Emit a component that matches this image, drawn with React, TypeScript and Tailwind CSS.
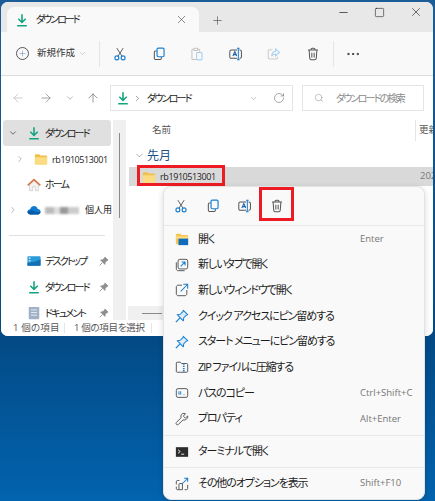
import { ArrowLeft, ArrowRight, ArrowUp, ChevronDown, ChevronRight, Minus, MoreHorizontal, Plus, RotateCw, Search, Square, X } from "lucide-react";
import type { ReactNode } from "react";

const font = "font-['Open_Sans','Noto_Sans_CJK_JP',sans-serif] [font-feature-settings:'palt']";

function DownloadIcon({ size = 16 }: { size?: number }) {
  return (
    <svg width={size} height={size} viewBox="0 0 16 16" fill="none">
      <path d="M8 1.500v9M3.800 6.600 8 10.800l4.200-4.200" stroke="#11a37f" strokeWidth="1.800" />
      <path d="M2.500 14.500h11" stroke="#11a37f" strokeWidth="1.800" />
    </svg>
  );
}

function FolderIcon({ size = 16 }: { size?: number }) {
  return (
    <svg width={size} height={size} viewBox="0 0 16 16" fill="none">
      <path d="M1 3.500c0-.6.4-1 1-1h4l1.500 1.500H14c.6 0 1 .4 1 1v8c0 .6-.4 1-1 1H2c-.6 0-1-.4-1-1z" fill="#f0c04c" />
      <path d="M1 6h14v7.500c0 .6-.4 1-1 1H2c-.6 0-1-.4-1-1z" fill="#fbdc82" />
    </svg>
  );
}

function CutIcon({ size = 15 }: { size?: number }) {
  return (
    <svg width={size} height={size} viewBox="0 0 18 18" fill="none">
      <path d="M5 1.500 11.600 12M13 1.500 6.400 12" stroke="#555" strokeWidth="1.200" />
      <circle cx="5" cy="14" r="2.500" stroke="#1a7fd0" strokeWidth="1.500" />
      <circle cx="13" cy="14" r="2.500" stroke="#1a7fd0" strokeWidth="1.500" />
    </svg>
  );
}

function CopyIcon({ size = 14 }: { size?: number }) {
  return (
    <svg width={size} height={size} viewBox="0 0 18 18" fill="none">
      <path d="M6 5H4.500C3.700 5 3 5.700 3 6.500v8c0 .8.700 1.500 1.500 1.500h6c.8 0 1.500-.7 1.500-1.500V13" stroke="#555" strokeWidth="1.300" />
      <rect x="6.500" y="1.500" width="9" height="11" rx="1.500" stroke="#1a7fd0" strokeWidth="1.500" />
    </svg>
  );
}

function PasteIcon() {
  return (
    <svg width="14" height="14" viewBox="0 0 18 18" fill="none">
      <path d="M5 3H3.500C2.900 3 2.500 3.400 2.500 4v11c0 .6.400 1 1 1H8" stroke="#c3c3c3" strokeWidth="1.300" />
      <path d="M10 3h1.500c.6 0 1 .4 1 1v2" stroke="#c3c3c3" strokeWidth="1.300" />
      <rect x="5" y="1.500" width="5" height="3" rx="1" stroke="#c3c3c3" strokeWidth="1.300" />
      <rect x="8.500" y="7" width="7" height="9.500" rx="1.200" stroke="#a9cfee" strokeWidth="1.400" />
    </svg>
  );
}

function RenameIcon() {
  return (
    <svg width="14" height="14" viewBox="0 0 18 18" fill="none">
      <rect x="1" y="4" width="15" height="10.500" rx="2" stroke="#555" strokeWidth="1.300" />
      <path d="M5 11.500 7.500 5.800l2.500 5.700M5.800 9.800h3.400" stroke="#1a5fa8" strokeWidth="1.300" />
      <rect x="10.500" y="1" width="3" height="16" fill="#f9f9f9" />
      <path d="M12 1.500v15M10.300 1.500h3.400M10.300 16.500h3.400" stroke="#1a7fd0" strokeWidth="1.300" />
    </svg>
  );
}

function ShareIcon() {
  return (
    <svg width="14" height="14" viewBox="0 0 18 18" fill="none">
      <path d="M7 3.500H3.500c-1 0-2 1-2 2v8c0 1 1 2 2 2h8c1 0 2-1 2-2v-1" stroke="#c9c9c9" strokeWidth="1.300" />
      <path d="M11 2.500 16 7l-5 4.500V9c-2.500 0-4 .8-5 3 0-3.500 1.800-6 5-6.500z" stroke="#a9cfee" strokeWidth="1.400" />
    </svg>
  );
}

function TrashIcon({ size = 14 }: { size?: number }) {
  return (
    <svg width={size} height={size} viewBox="0 0 18 18" fill="none">
      <path d="M2.500 4h13M6.500 4V3c0-.8.700-1.500 1.500-1.500h2c.8 0 1.500.7 1.500 1.500v1" stroke="#555" strokeWidth="1.300" />
      <path d="M4 4l.8 10.500c.1 1 .9 2 2 2h4.400c1.100 0 1.900-1 2-2L14 4" stroke="#555" strokeWidth="1.300" />
      <path d="M7.500 7.500v6M10.500 7.500v6" stroke="#555" strokeWidth="1.300" />
    </svg>
  );
}

function HomeIcon() {
  return (
    <svg width="14" height="14" viewBox="0 0 16 16" fill="none">
      <path d="M3 7.500V14.500H6.500V10h3v4.500H13V7.500L8 3z" fill="#f2f2f2" stroke="#b8b8b8" strokeWidth=".6" />
      <path d="M.8 8.500 8 1.800l7.200 6.700" stroke="#d9764a" strokeWidth="1.800" />
    </svg>
  );
}

function CloudIcon() {
  return (
    <svg width="14" height="14" viewBox="0 0 16 16">
      <path d="M4 13c-2 0-3.500-1.200-3.500-3S2 7 3.600 7C4.200 5 6 3.500 8 3.500c2 0 3.700 1.200 4.300 3.300 1.800 0 3.200 1.400 3.200 3.100S14 13 12.300 13z" fill="#0f7ad1" />
      <path d="M4 13c-2 0-3.500-1.200-3.500-3 2 -1 4 -2 6-1.500 2 1 5 3 9 1.500 0 1.700-1.500 3-3.200 3z" fill="#0b5aa8" />
    </svg>
  );
}

function DesktopIcon() {
  return (
    <svg width="14" height="14" viewBox="0 0 16 16">
      <rect x=".5" y="2.500" width="15" height="11" rx="1" fill="#2a9bd8" />
      <path d="M.5 10c5 0 8-1 15-4v6.500c0 .6-.4 1-1 1h-13c-.6 0-1-.4-1-1z" fill="#166fb5" />
      <rect x="2" y="4" width="2" height="1.500" fill="#dff1fb" />
      <rect x="2" y="7" width="2" height="1.500" fill="#dff1fb" />
    </svg>
  );
}

function DocIcon() {
  return (
    <svg width="14" height="14" viewBox="0 0 16 16">
      <rect x="2" y="1" width="12" height="14" rx="1" fill="#9fb0c7" />
      <path d="M4.500 4.500h7M4.500 7.500h7M4.500 10.500h7" stroke="#eef2f7" strokeWidth="1" />
    </svg>
  );
}

function PinIcon({ color = "#8e8e8e", fill = "#8e8e8e", size = 10 }: { color?: string; fill?: string; size?: number }) {
  return (
    <svg width={size} height={size} viewBox="0 0 16 16" fill="none">
      <path d="M9.500 1.500 14.500 6.500 13 7l-3 3-.5 3.500L2.500 6.500 6 6l3-3z" fill={fill} stroke={color} strokeWidth="1.200" strokeLinejoin="round" />
      <path d="M5.500 10.500 1 15" stroke={color} strokeWidth="1.400" />
    </svg>
  );
}

function OpenIcon() {
  return (
    <svg width="14" height="14" viewBox="0 0 16 16">
      <path d="M1 3c0-.6.4-1 1-1h4l1.500 1.500H14c.6 0 1 .4 1 1V14H2c-.6 0-1-.4-1-1z" fill="#f4c550" />
      <rect x="4" y="7" width="11" height="8" fill="#0f6cbd" />
      <rect x="1" y="5" width="14" height="2.500" fill="#fbdc82" />
    </svg>
  );
}

function NewTabIcon() {
  return (
    <svg width="14" height="14" viewBox="0 0 16 16" fill="none">
      <rect x="3.500" y="1.500" width="11" height="11" rx="2" stroke="#555" strokeWidth="1.100" />
      <path d="M1.500 5v7.500c0 1 1 2 2 2H11" stroke="#555" strokeWidth="1.100" />
      <path d="M6.500 9.500l4.500-4.500M7.500 4.500h4V8.500" stroke="#1a7fd0" strokeWidth="1.200" />
    </svg>
  );
}

function NewWindowIcon() {
  return (
    <svg width="14" height="14" viewBox="0 0 16 16" fill="none">
      <path d="M8 2.500H3.500c-1 0-2 1-2 2v8c0 1 1 2 2 2h8c1 0 2-1 2-2V8" stroke="#555" strokeWidth="1.100" />
      <path d="M6.500 9.500 14 2M9.500 1.500H14.500V6.500" stroke="#1a7fd0" strokeWidth="1.200" />
    </svg>
  );
}

function ZipIcon() {
  return (
    <svg width="14" height="14" viewBox="0 0 16 16" fill="none">
      <path d="M1.500 3.500c0-.6.400-1 1-1h3.500L7.500 4H13.500c.6 0 1 .4 1 1v8c0 .6-.4 1-1 1h-11c-.6 0-1-.4-1-1z" stroke="#555" strokeWidth="1.100" />
      <path d="M10 4v10" stroke="#1a7fd0" strokeWidth="2" strokeDasharray="1.500 1" />
    </svg>
  );
}

function PathIcon() {
  return (
    <svg width="14" height="14" viewBox="0 0 16 16" fill="none">
      <rect x="1.500" y="3" width="13" height="10" rx="2" stroke="#555" strokeWidth="1.100" />
      <path d="M4.500 6v4M6.500 6v4M9 10h.5M11 10h.5" stroke="#1a7fd0" strokeWidth="1.100" />
    </svg>
  );
}

function WrenchIcon() {
  return (
    <svg width="14" height="14" viewBox="0 0 16 16" fill="none">
      <path d="M14.500 4.500 11.800 7 9.500 4.800 12 2c-2-1-5-.3-5.300 2.500-.1.800 0 1.500.3 2L1.800 11.800c-.8.800-.8 1.800-.2 2.400.7.700 1.700.6 2.400-.1L9.200 9c2.800.8 5.800-1.300 5.300-4.500z" stroke="#555" strokeWidth="1.100" strokeLinejoin="round" />
    </svg>
  );
}

function TerminalIcon() {
  return (
    <svg width="14" height="14" viewBox="0 0 16 16">
      <rect x="1" y="2.500" width="14" height="11" fill="#2c2c2c" />
      <path d="M3.500 5.500 6 7.500l-2.500 2" stroke="#fff" fill="none" />
      <path d="M7 10.500h3.500" stroke="#fff" />
    </svg>
  );
}

function MoreOptionsIcon() {
  return (
    <svg width="14" height="14" viewBox="0 0 16 16" fill="none">
      <path d="M5 4H3C2 4 1.500 4.500 1.500 5.500v3M1.500 11v2c0 1 .5 1.500 1.500 1.500h2M5 7.500h3.500V14.500H5.500c-.5 0-1 0-1-.5V8z" stroke="#555" strokeWidth="1.100" />
      <path d="M8 8l6-6M10.500 1.500h4V5.500" stroke="#1a7fd0" strokeWidth="1.200" />
      <path d="M14.500 9v4c0 1-.5 1.500-1.500 1.500h-2" stroke="#555" strokeWidth="1.100" />
    </svg>
  );
}

function NavRow({
  selected,
  chevron,
  chevronX = "w-[15px]",
  icon,
  children,
  pinned,
  height = "h-[26px]",
}: {
  selected?: boolean;
  chevron?: ReactNode;
  chevronX?: string;
  icon: ReactNode;
  children: ReactNode;
  pinned?: boolean;
  height?: string;
}) {
  return (
    <div className={`mx-[2px] flex ${height} shrink-0 items-center rounded-[3px] ${selected ? "bg-[#e0e0e0]" : ""}`}>
      <div className={`flex ${chevronX} shrink-0 justify-end`}>{chevron}</div>
      <div className="flex w-[23px] shrink-0 justify-end">{icon}</div>
      <div className="ml-[4px] flex-1 whitespace-nowrap text-[10px] tracking-[-1.800px] text-[#1c1c1c]">{children}</div>
      {pinned && (
        <div className="mr-[2px]">
          <PinIcon />
        </div>
      )}
    </div>
  );
}

const menuItems: { icon: ReactNode; label: string; shortcut?: string }[] = [
  { icon: <OpenIcon />, label: "開く", shortcut: "Enter" },
  { icon: <NewTabIcon />, label: "新しいタブで開く" },
  { icon: <NewWindowIcon />, label: "新しいウィンドウで開く" },
  { icon: <PinIcon color="#1a7fd0" fill="#dcecf9" size={14} />, label: "クイック アクセスにピン留めする" },
  { icon: <PinIcon color="#1a7fd0" fill="#dcecf9" size={14} />, label: "スタート メニューにピン留めする" },
  { icon: <ZipIcon />, label: "ZIP ファイルに圧縮する" },
  { icon: <PathIcon />, label: "パスのコピー", shortcut: "Ctrl+Shift+C" },
  { icon: <WrenchIcon />, label: "プロパティ", shortcut: "Alt+Enter" },
];

function MenuRow({ icon, label, shortcut, height = "h-[25.700px]" }: { icon: ReactNode; label: string; shortcut?: string; height?: string }) {
  return (
    <div className={`flex ${height} items-center pl-[10px]`}>
      <div className="flex w-[16px] shrink-0 justify-center">{icon}</div>
      <div className="ml-[8px] w-[162px] whitespace-nowrap text-[11px] tracking-[-1.100px] text-[#1c1c1c]">{label}</div>
      {shortcut && <div className="whitespace-nowrap text-[9.500px] text-[#767676]">{shortcut}</div>}
    </div>
  );
}

export default function App() {
  return (
    <div className={`relative h-[501px] w-[435px] overflow-hidden bg-[linear-gradient(180deg,#1c5d98_0%,#034a85_67%,#0263ae_100%)] pl-[1px] pt-[2px] ${font}`}>
      <div className="flex h-[334px] w-[432px] flex-col overflow-hidden rounded-[7px] bg-white">
        {/* tab strip */}
        <div className="flex h-[30px] shrink-0 items-end bg-[#e8e8e8] pl-[6px]">
          <div className="flex h-[25px] w-[192px] items-center rounded-t-[7px] bg-[#f9f9f9] pl-[8px] pr-[11px]">
            <DownloadIcon size={14} />
            <span className="ml-[7px] flex-1 text-[10px] tracking-[-2px] text-[#1c1c1c]">ダウンロード</span>
            <X size={13} strokeWidth={1} color="#333" />
          </div>
          <div className="ml-[12px] mb-[5px] flex">
            <Plus size={13} strokeWidth={1} color="#333" />
          </div>
          <div className="ml-auto mb-[13px] flex items-center pr-[10px]">
            <Minus size={13} strokeWidth={1.200} color="#111" />
            <Square size={11} strokeWidth={1.200} color="#111" className="ml-[24px]" />
            <X size={14} strokeWidth={1} color="#111" className="ml-[24px]" />
          </div>
        </div>

        {/* command bar */}
        <div className="flex h-[44px] shrink-0 items-center border-b border-[#dcdcdc] bg-[#f9f9f9] pl-[15px]">
          <div className="flex h-[13px] w-[13px] items-center justify-center rounded-full border border-[#555]">
            <Plus size={9} strokeWidth={1} color="#1a5fa8" />
          </div>
          <span className="ml-[8px] text-[9.500px] text-[#333]">新規作成</span>
          <ChevronDown size={9} strokeWidth={1} color="#888" className="ml-[3px]" />
          <div className="ml-[12px] h-[26px] w-px bg-[#e5e5e5]" />
          <div className="ml-[13px] flex items-center gap-[24.500px]">
            <CutIcon size={14} />
            <CopyIcon />
            <PasteIcon />
            <RenameIcon />
            <ShareIcon />
            <TrashIcon />
          </div>
          <div className="ml-[13px] h-[26px] w-px bg-[#e5e5e5]" />
          <MoreHorizontal size={16} strokeWidth={1.500} color="#333" className="ml-[11px]" />
        </div>

        {/* address bar */}
        <div className="flex h-[44px] shrink-0 items-center bg-white pl-[10px]">
          <ArrowLeft size={14} strokeWidth={1} color="#aaa" />
          <ArrowRight size={14} strokeWidth={1} color="#666" className="ml-[14px]" />
          <ChevronDown size={10} strokeWidth={1} color="#555" className="ml-[12px]" />
          <ArrowUp size={14} strokeWidth={1} color="#555" className="ml-[11px]" />
          <div className="ml-[10px] flex h-[26px] w-[183px] items-center border border-[#e5e5e5] pl-[5px]">
            <DownloadIcon size={14} />
            <ChevronRight size={9} strokeWidth={1.500} color="#555" className="ml-[3px]" />
            <span className="ml-[5px] flex-1 text-[10px] tracking-[-1.800px] text-[#1c1c1c]">ダウンロード</span>
            <ChevronDown size={9} strokeWidth={1} color="#666" />
            <RotateCw size={12} strokeWidth={1} color="#555" className="ml-[15px] mr-[7px]" />
          </div>
          <div className="ml-[9px] flex h-[26px] w-[122px] items-center border border-[#e5e5e5] pl-[11px]">
            <Search size={10} strokeWidth={1} color="#777" />
            <span className="ml-[12px] whitespace-nowrap text-[10px] tracking-[-1.800px] text-[#8a8a8a]">ダウンロードの検索</span>
          </div>
        </div>

        {/* body */}
        <div className="flex min-h-0 flex-1 overflow-hidden">
          <div className="flex w-[112px] shrink-0 flex-col">
            <NavRow selected chevron={<ChevronDown size={10} strokeWidth={1.500} color="#222" />} icon={<DownloadIcon size={14} />}>
              ダウンロード
            </NavRow>
            <NavRow chevronX="w-[22px]" chevron={<ChevronRight size={10} strokeWidth={1} color="#555" />} icon={<FolderIcon size={14} />}>
              <span className="text-[9px] tracking-[-0.400px]">rb1910513001</span>
            </NavRow>
            <NavRow height="h-[25px]" icon={<HomeIcon />}>
              ホーム
            </NavRow>
            <NavRow chevron={<ChevronRight size={10} strokeWidth={1} color="#555" />} icon={<CloudIcon />}>
              <div className="flex items-center">
                <div className="flex h-[7px] w-[34px] blur-[1px]">
                  <div className="w-[9px] bg-[#bbb]" />
                  <div className="w-[6px] bg-[#ddd]" />
                  <div className="w-[8px] bg-[#999]" />
                  <div className="w-[11px] bg-[#ccc]" />
                </div>
                <span className="ml-[6px] text-[9px] tracking-normal">個人用</span>
              </div>
            </NavRow>
            <div className="mx-[8px] my-[12px] h-px shrink-0 bg-[#e0e0e0]" />
            <NavRow icon={<DesktopIcon />} pinned>
              デスクトップ
            </NavRow>
            <NavRow icon={<DownloadIcon size={14} />} pinned>
              ダウンロード
            </NavRow>
            <NavRow icon={<DocIcon />} pinned>
              ドキュメント
            </NavRow>
          </div>

          {/* nav scrollbar */}
          <div className="flex w-[13px] shrink-0 justify-center bg-[#f0f0f0] pt-[13px]">
            <div className="h-[85px] w-px bg-[#8a8a8a]" />
          </div>

          {/* file list */}
          <div className="relative min-w-0 flex-1 pl-[3px]">
            <div className="flex h-[21px] items-center pl-[23px] text-[9.500px] text-[#555]">
              <span className="flex-1">名前</span>
              <span className="h-full w-px bg-[#e5e5e5]" />
              <span className="ml-[3px] w-[14px] overflow-hidden whitespace-nowrap">更新日時</span>
            </div>
            <div className="mt-[3px] flex h-[23px] items-center pl-[5px] text-[#333]">
              <ChevronDown size={11} strokeWidth={1} color="#555" />
              <span className="ml-[2px] text-[12px] text-[#1c4f86]">先月</span>
            </div>
            <div className="flex h-[19px] items-center bg-[#d9d9d9] pl-[13px]">
              <FolderIcon size={14} />
              <span className="ml-[4px] flex-1 text-[9px] tracking-[-0.400px] text-[#1c1c1c]">rb1910513001</span>
              <span className="w-[13px] overflow-hidden whitespace-nowrap text-[9.500px] text-[#777]">2023</span>
            </div>
            {/* red highlight */}
            <div className="absolute left-[11px] top-[45px] h-[21px] w-[88px] border-[3px] border-[#ed1c24]" />
            {/* bottom scrollbar */}
            <div className="absolute bottom-0 left-[2px] flex h-[14px] w-[40px] items-center bg-[#f0f0f0] pl-[14px]">
              <div className="h-px w-[20px] bg-[#8a8a8a]" />
            </div>
          </div>
        </div>

        {/* status bar */}
        <div className="flex h-[16px] shrink-0 items-center bg-white pl-[12px] text-[9.500px] text-[#555]">
          <span className="w-[51px] tracking-[0.200px]">1 個の項目</span>
          <span className="h-[10px] w-px bg-[#e5e5e5]" />
          <span className="ml-[9px] w-[77px] tracking-[-0.300px]">1 個の項目を選択</span>
          <span className="h-[10px] w-px bg-[#e5e5e5]" />
        </div>
      </div>

      {/* context menu */}
      <div className="absolute left-[163px] top-[186px] h-[314px] w-[262px] rounded-[8px] border border-[#e3e3e3] bg-[#f9f9f9] shadow-[0_2px_6px_rgba(0,0,0,0.15)]">
        <div className="relative flex h-[39px] items-center border-b border-[#e8e8e8] pl-[10px]">
          <CutIcon size={14} />
          <div className="ml-[18px]">
            <CopyIcon />
          </div>
          <div className="ml-[18px]">
            <RenameIcon />
          </div>
          <div className="ml-[18px]">
            <TrashIcon />
          </div>
          <div className="absolute left-[95px] top-0 h-[34px] w-[35px] border-[3px] border-[#ed1c24]" />
        </div>
        {menuItems.map((m) => (
          <MenuRow key={m.label} {...m} />
        ))}
        <div className="mb-[2px] mt-[3px] h-px bg-[#e8e8e8]" />
        <MenuRow icon={<TerminalIcon />} label="ターミナルで開く" height="h-[28px]" />
        <div className="mb-[2px] mt-[1px] h-px bg-[#e8e8e8]" />
        <MenuRow icon={<MoreOptionsIcon />} label="その他のオプションを表示" shortcut="Shift+F10" height="h-[28px]" />
      </div>
    </div>
  );
}
